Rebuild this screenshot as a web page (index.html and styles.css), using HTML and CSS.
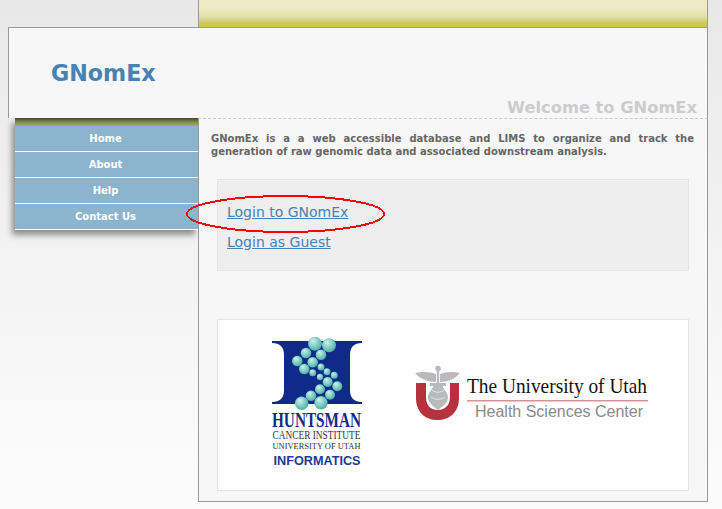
FILE: index.html
```html
<!DOCTYPE html>
<html lang="en">
<head>
<meta charset="utf-8">
<title>GNomEx</title>
<link rel="stylesheet" href="styles.css">
</head>
<body>
<div class="page">
  <div class="topbar"></div>
  <header class="header">
    <h1 class="brand">GNomEx</h1>
    <div class="welcome">Welcome to GNomEx</div>
  </header>
  <div class="columns">
    <nav class="sidebar">
      <div class="strip"></div>
      <a class="item" href="#">Home</a>
      <a class="item" href="#">About</a>
      <a class="item" href="#">Help</a>
      <a class="item" href="#">Contact Us</a>
    </nav>
    <main class="content">
      <p class="intro">GNomEx is a a web accessible database and LIMS to organize and track the generation of raw genomic data and associated downstream analysis.</p>
      <section class="login">
        <a class="link" href="#">Login to GNomEx</a>
        <a class="link" href="#">Login as Guest</a>
        <svg class="circle" width="202" height="41" viewBox="0 0 202 41"><ellipse cx="100.500" cy="20" rx="98.500" ry="18" fill="none" stroke="#f00" stroke-width="2" shape-rendering="crispEdges"/></svg>
      </section>
      <section class="logos">
        <svg class="hci" width="92" height="132" viewBox="0 0 92 132">
          <defs>
            <radialGradient id="ball" cx=".45" cy=".45" r=".62" fx=".35" fy=".25">
              <stop offset="0" stop-color="#d4f1ec"/>
              <stop offset=".6" stop-color="#7ccac3"/>
              <stop offset="1" stop-color="#3fa5a0"/>
            </radialGradient>
          </defs>
          <path d="M0 4H90V6C82 6 78 10 78 18V53C78 61 82 65 90 65V67H0V65C8 65 12 61 12 53V18C12 10 8 6 0 6Z" fill="#0f2a88"/>
          <g fill="url(#ball)">
            <circle cx="43" cy="6.700" r="7"/><circle cx="57" cy="8.300" r="7"/><circle cx="34" cy="16" r="5.300"/><circle cx="49" cy="17.700" r="5.300"/>
            <circle cx="25.300" cy="24" r="5.300"/><circle cx="40.700" cy="25.300" r="5.300"/><circle cx="32.300" cy="32" r="5.300"/><circle cx="49" cy="30" r="3.500"/>
            <circle cx="55" cy="34.700" r="3.500"/><circle cx="40.700" cy="35.700" r="3.500"/><circle cx="62.300" cy="38.300" r="3.500"/><circle cx="48" cy="40" r="3.200"/>
            <circle cx="55.700" cy="45" r="5"/><circle cx="65.300" cy="49.300" r="5"/><circle cx="48" cy="52.300" r="5"/><circle cx="58" cy="57.700" r="5"/>
            <circle cx="39" cy="58.700" r="5.300"/><circle cx="29.700" cy="66.300" r="6.700"/><circle cx="49" cy="65.700" r="6.700"/>
          </g>
          <text class="hci-a" x="44.500" y="89.500" textLength="89" lengthAdjust="spacingAndGlyphs">HUNTSMAN</text>
          <text class="hci-b" x="44.500" y="102" textLength="88" lengthAdjust="spacingAndGlyphs">CANCER INSTITUTE</text>
          <text class="hci-c" x="44.500" y="112" textLength="88" lengthAdjust="spacingAndGlyphs">UNIVERSITY OF UTAH</text>
          <text class="hci-d" x="45" y="128" textLength="87" lengthAdjust="spacingAndGlyphs">INFORMATICS</text>
        </svg>
        <svg class="uu" width="236" height="60" viewBox="0 0 236 60">
          <g fill="#b9babb">
            <circle cx="23" cy="2.500" r="2.800"/>
            <path d="M0 7C8 5 16 6 21 8V16C13 16 5 13 0 7ZM45 7C37 5 30 6 25 8V16C33 16 40 13 45 7Z"/>
            <rect x="21.800" y="4" width="2.400" height="38"/>
            <path d="M15 17H31V20H28C27 22 33 26 33 31C33 37 28 40 23 44C18 40 13 37 13 31C13 26 19 22 18 20H15Z"/>
          </g>
          <path d="M17 24C21 27 25 27 29 24M16 31C20 34 26 34 30 31" stroke="#e6e6e6" stroke-width="1" fill="none"/>
          <path d="M1 17H11V31C11 39 15 44 23 44C30 44 35 39 35 31V17H44V32C44 46 35 54 22.500 54C10 54 1 46 1 32Z" fill="#b7323f"/>
          <text class="uu-a" x="52" y="27" textLength="180" lengthAdjust="spacingAndGlyphs">The University of Utah</text>
          <rect class="uu-rule" x="52" y="34" width="181" height="1.500"/>
          <text class="uu-b" x="60" y="51" textLength="168" lengthAdjust="spacingAndGlyphs">Health Sciences Center</text>
        </svg>
      </section>
    </main>
  </div>
</div>
</body>
</html>
```

FILE: styles.css
```css
html, body { margin: 0; padding: 0; height: 100%; }
body {
  background: linear-gradient(#e8e8e8 0, #fafafa 440px, #fbfbfb 100%);
  font-family: "DejaVu Sans", Verdana, sans-serif;
  overflow: hidden;
}
.page { width: 700px; margin-left: 8px; }
.topbar {
  margin-left: 190px;
  height: 27px;
  border-left: 1px solid #999;
  border-right: 1px solid #999;
  background: linear-gradient(#eeebc4 0, #eeebc4 9px, #e2dfa4 17px, #ccc85c 23px, #cbc659 27px);
}
.header {
  box-sizing: border-box;
  height: 91px;
  background: #f7f7f7;
  border-top: 1px solid #999;
  border-left: 1px solid #999;
  border-right: 1px solid #999;
  display: flex;
  justify-content: space-between;
  position: relative;
}
.brand {
  margin: 30px 0 0 42px;
  font-size: 22.200px;
  line-height: 30px;
  font-weight: bold;
  color: #4682b4;
}
.welcome {
  align-self: flex-end;
  margin: 0 10px -1px 0;
  font-size: 16.300px;
  line-height: 22px;
  font-weight: bold;
  color: #cccccc;
}
.columns { display: flex; align-items: flex-start; padding-left: 7px; }
.sidebar {
  width: 183px;
  flex: none;
  display: flex;
  flex-direction: column;
  box-shadow: -3px 5px 6px rgba(60, 60, 60, .55);
}
.strip { height: 8px; background: linear-gradient(#43462c, #7e8a4c 50%, #a0b066); }
.item {
  display: block;
  height: 25px;
  line-height: 25px;
  padding-right: 2px;
  border-bottom: 1px solid #fff;
  background: #8cb4cc;
  color: #fff;
  font-size: 10px;
  font-weight: bold;
  text-align: center;
  text-decoration: none;
}
.content {
  box-sizing: border-box;
  width: 510px;
  height: 384px;
  background: #f7f7f7;
  border-left: 1px solid #999;
  border-right: 1px solid #999;
  border-bottom: 1px solid #999;
  border-top: 1px dashed #ccc;
  padding: 13px 13px 0 12px;
}
.intro {
  margin: 0;
  font-size: 10px;
  line-height: 13px;
  font-weight: bold;
  color: #666;
  text-align: justify;
}
.login {
  position: relative;
  box-sizing: border-box;
  margin: 21px 5px 0 6px;
  height: 92px;
  background: #eeeeee;
  border: 1px solid #e4e4e4;
  padding: 23px 0 0 9px;
  display: flex;
  flex-direction: column;
  align-items: flex-start;
  gap: 12px;
}
.link { font-size: 14px; line-height: 18px; color: #4682b4; }
.circle { position: absolute; left: -33px; top: 14px; }
.logos {
  box-sizing: border-box;
  margin: 48px 5px 0 6px;
  height: 172px;
  background: #fff;
  border: 1px solid #e4e4e4;
  display: flex;
  align-items: flex-start;
  padding: 17px 0 0 54px;
  gap: 51px;
}
.hci { flex: none; overflow: visible; }
.uu { flex: none; margin-top: 29px; overflow: visible; }
.hci-a, .hci-b, .hci-c { font-family: "Liberation Serif", serif; text-anchor: middle; }
.hci-a { font-size: 20px; font-weight: bold; fill: #0f2a88; }
.hci-b { font-size: 12.500px; fill: #333; }
.hci-c { font-size: 8.500px; fill: #333; }
.hci-d { font-family: "Liberation Sans", sans-serif; font-size: 13.500px; font-weight: bold; text-anchor: middle; fill: #1d3a94; }
.uu-a { font-family: "Liberation Serif", serif; font-size: 22px; fill: #111; }
.uu-rule { fill: #d9909a; }
.uu-b { font-family: "Liberation Sans", sans-serif; font-size: 16px; fill: #8a8a8a; }
```
